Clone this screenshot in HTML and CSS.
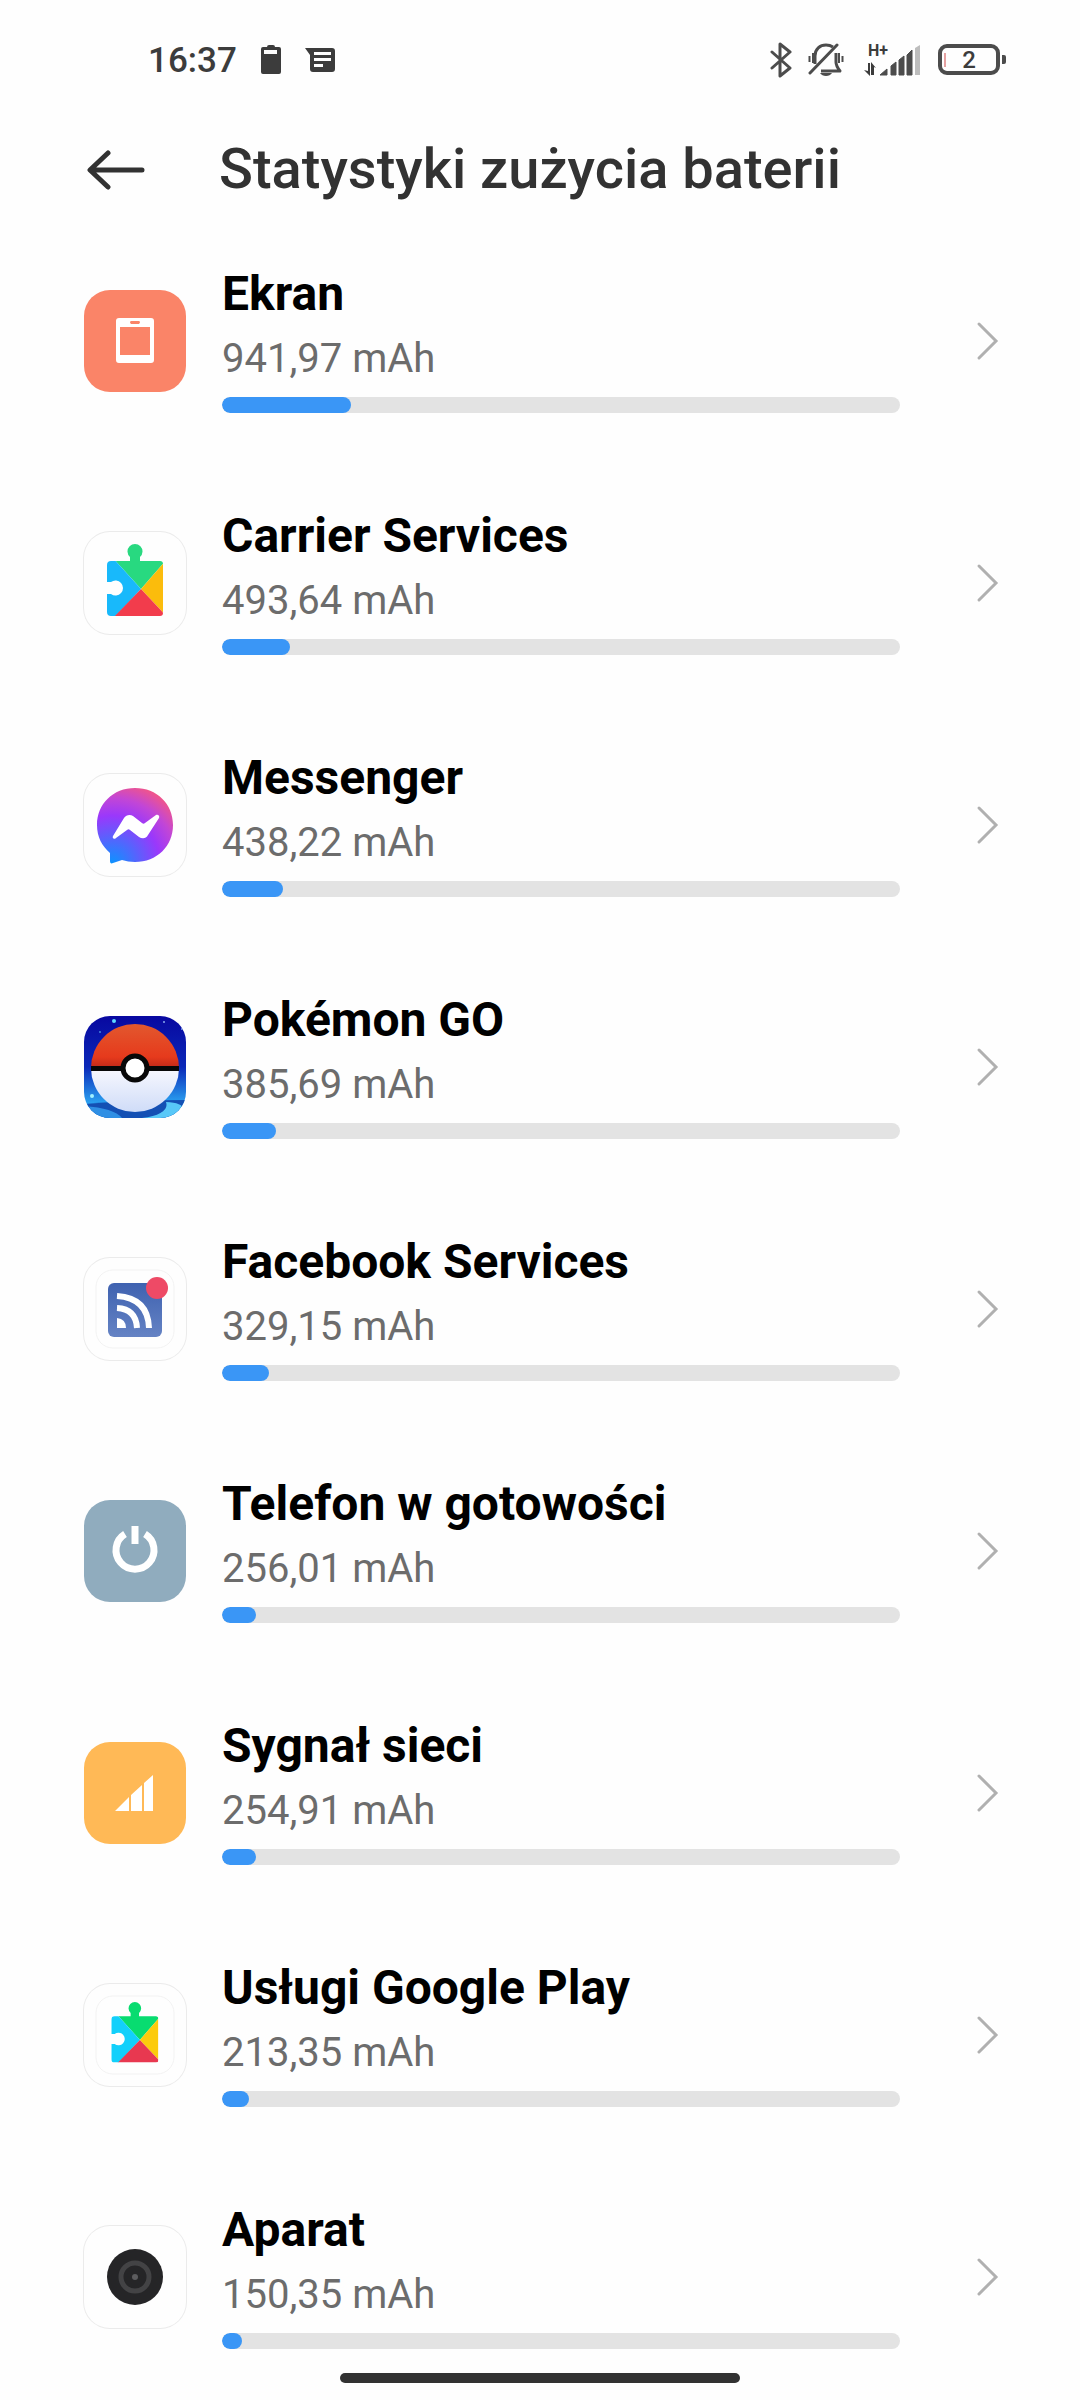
FILE: index.html
```html
<!DOCTYPE html>
<html lang="pl">
<head>
    <meta charset="UTF-8">
    <meta name="viewport" content="width=device-width, initial-scale=1.0">
    <title>Statystyki zużycia baterii</title>
    <link rel="stylesheet" href="styles.css">
</head>
<body>
    <div class="status">
        <span class="clock">16:37</span>
        <svg class="s-battery" width="20" height="30" viewBox="0 0 20 30">
            <path fill="#3c3c3c" fill-rule="evenodd" d="M6 2q0-2 2-2h4q2 0 2 2h4q2 0 2 2v23q0 2-2 2H2q-2 0-2-2V4q0-2 2-2zM3 5v4h13V5z"/>
        </svg>
        <svg class="s-message" width="30" height="26" viewBox="0 0 30 26">
            <path fill="#3c3c3c" fill-rule="evenodd" d="M0 1h27q3 0 3 3v18q0 3-3 3H8q-3 0-3-3V8zM9 5v3h17V5zM9 11v3h17v-3zM9 17v3h9v-3z"/>
        </svg>
        <div class="status-right">
            <svg width="22" height="36" viewBox="0 0 22 36" fill="none" stroke="#4c4c4c" stroke-width="3" stroke-linejoin="round" stroke-linecap="round">
                <path d="M2 10l18 16-10 8V2l10 8L2 26"/>
            </svg>
            <svg width="36" height="36" viewBox="0 0 36 36" fill="none" stroke="#4c4c4c" stroke-width="3">
                <path d="M7 22V14C7 7 12 3 18 3q4 0 7 2M28 11v9q0 4 4 9H13" stroke-linejoin="round"/>
                <path d="M2 31L29 3" stroke-linecap="round"/>
                <path d="M12 31h12q-2 3-6 3t-6-3z" fill="#4c4c4c" stroke="none"/>
                <path d="M1.500 14v6M5 11v10M31 11v10M34.500 14v6" stroke-width="2"/>
            </svg>
            <svg class="s-signal" width="58" height="36" viewBox="0 0 58 36">
                <text class="net" x="4" y="14">H+</text>
                <path d="M0 28l6 6V21h-2v8zM12 26l-5-6v13h3v-8z" fill="#3c3c3c"/>
                <path d="M16 33l7-6v6zM27 33V24l5-4v13zM35 33V18l5-4v19zM43 33V13l5-5v25z" fill="#4c4c4c" stroke="#4c4c4c"/>
                <path d="M51 33V6l5-3v30z" fill="#bdbdbd"/>
            </svg>
            <svg class="s-level" width="70" height="32" viewBox="0 0 70 32">
                <rect x="2" y="2" width="58" height="27" rx="7" fill="none" stroke="#4c4c4c" stroke-width="4"/>
                <path d="M7 9v14" stroke="#c44" stroke-width="1"/>
                <path d="M64 11h2q2 0 2 2v5q0 2-2 2h-2z" fill="#4c4c4c"/>
                <text class="level" x="31" y="24" text-anchor="middle">2</text>
            </svg>
        </div>
    </div>

    <header class="header">
        <button type="button" class="back" aria-label="Wstecz">
            <svg width="60" height="42" viewBox="0 0 60 42" fill="none" stroke="#323232" stroke-width="5" stroke-linecap="round" stroke-linejoin="round">
                <path d="M21 4L3 21l18 17M4 21h51"/>
            </svg>
        </button>
        <h1>Statystyki zużycia baterii</h1>
    </header>

    <ul class="list">
        <li>
            <a class="row" href="#">
                <svg class="icon screen" viewBox="0 0 102 102">
                    <path fill="#fff" fill-rule="evenodd" d="M35 28h32q3 0 3 3v39q0 3-3 3H35q-3 0-3-3V31q0-3 3-3zM36 37v28h30V37zM47 31q-2 1 0 3h8q2-2 0-3z"/>
                </svg>
                <span class="info">
                    <span class="name">Ekran</span>
                    <span class="usage">941,97 mAh</span>
                    <progress value="19" max="100" aria-label="Ekran"></progress>
                </span>
                <svg class="arrow" viewBox="0 0 24 42"><path d="M3 4l17 17L3 38"/></svg>
            </a>
        </li>
        <li>
            <a class="row" href="#">
                <svg class="icon framed" viewBox="0 0 102 102">
                    <defs>
                        <clipPath id="puzzle">
                            <path d="M27 29h19v-4a7.500 7.500 0 1 1 10 0v4h20q3 0 3 3v49q0 3-3 3H27q-4 0-4-4V62h4a7.500 7.500 0 1 0 0-12h-4V33q0-4 4-4z"/>
                        </clipPath>
                    </defs>
                    <g clip-path="url(#puzzle)">
                        <path fill="#28d980" d="M28 25V8h56v18L57 57z"/>
                        <path fill="#18b9fb" d="M18 25h10l29 32-30 32h-9z"/>
                        <path fill="#fbbc0c" d="M84 26L57 57l28 30z"/>
                        <path fill="#f23c4c" d="M57 57l28 30H28z"/>
                    </g>
                </svg>
                <span class="info">
                    <span class="name">Carrier Services</span>
                    <span class="usage">493,64 mAh</span>
                    <progress value="10" max="100" aria-label="Carrier Services"></progress>
                </span>
                <svg class="arrow" viewBox="0 0 24 42"><path d="M3 4l17 17L3 38"/></svg>
            </a>
        </li>
        <li>
            <a class="row" href="#">
                <svg class="icon framed" viewBox="0 0 102 102">
                    <defs>
                        <radialGradient id="bubble" gradientUnits="userSpaceOnUse" cx="28" cy="90" r="88">
                            <stop offset="0" stop-color="#0a94ff"/>
                            <stop offset=".55" stop-color="#9a38fb"/>
                            <stop offset=".75" stop-color="#c246d6"/>
                            <stop offset="1" stop-color="#ff5a72"/>
                        </radialGradient>
                    </defs>
                    <path fill="url(#bubble)" d="M51 14c22 0 38 16 38 37S73 88 51 88c-5 0-9-1-13-2l-9 3c-2 1-3 0-3-2v-8C18 72 13 63 13 51c0-21 16-37 38-37z"/>
                    <path fill="#fff" d="M29 62l11-18c2-3 6-4 9-2l9 7c1 1 2 1 3 0l11-8c2-1 4 1 3 3L64 61c-2 4-6 4-9 2l-9-7c-1-1-2-1-3 0l-11 8c-2 2-4 0-3-2z"/>
                </svg>
                <span class="info">
                    <span class="name">Messenger</span>
                    <span class="usage">438,22 mAh</span>
                    <progress value="9" max="100" aria-label="Messenger"></progress>
                </span>
                <svg class="arrow" viewBox="0 0 24 42"><path d="M3 4l17 17L3 38"/></svg>
            </a>
        </li>
        <li>
            <a class="row" href="#">
                <svg class="icon" viewBox="0 0 102 102">
                    <defs>
                        <linearGradient id="sky" x1="0" y1="0" x2="0" y2="1">
                            <stop offset="0" stop-color="#0808a0"/>
                            <stop offset=".5" stop-color="#0a28b8"/>
                            <stop offset=".85" stop-color="#2aa0f0"/>
                        </linearGradient>
                        <linearGradient id="ballTop" x1="0" y1="0" x2="0" y2="1">
                            <stop offset="0" stop-color="#e2582e"/>
                            <stop offset=".75" stop-color="#e63a1c"/>
                            <stop offset="1" stop-color="#c02818"/>
                        </linearGradient>
                        <linearGradient id="ballBottom" x1="0" y1="0" x2="0" y2="1">
                            <stop offset="0" stop-color="#f8f8fe"/>
                            <stop offset="1" stop-color="#cfdcf8"/>
                        </linearGradient>
                    </defs>
                    <rect width="102" height="102" fill="url(#sky)"/>
                    <path fill="#1450b4" d="M0 88q50-4 102-4v18H0z"/>
                    <path fill="#58c8f8" d="M82 86q26 1 12 16H58q28-4 24-16z"/>
                    <path fill="#2f8fe4" d="M0 90q30 2 38 12H0z"/>
                    <circle cx="30" cy="5" r="2" fill="#60d8ff"/>
                    <circle cx="8" cy="80" r="2" fill="#a0f0ff"/>
                    <circle cx="80" cy="6" r="1" fill="#8ae"/>
                    <circle cx="98" cy="13" r="1" fill="#8ae"/>
                    <circle cx="16" cy="16" r="1" fill="#48d"/>
                    <path fill="url(#ballTop)" d="M7 52a44 44 0 0 1 88 0z"/>
                    <path fill="url(#ballBottom)" d="M7 52a44 44 0 0 0 88 0z"/>
                    <path fill="#080808" d="M7 50h88v5H7z"/>
                    <circle cx="51" cy="52" r="12" fill="#fff" stroke="#080808" stroke-width="5"/>
                </svg>
                <span class="info">
                    <span class="name">Pokémon GO</span>
                    <span class="usage">385,69 mAh</span>
                    <progress value="8" max="100" aria-label="Pokémon GO"></progress>
                </span>
                <svg class="arrow" viewBox="0 0 24 42"><path d="M3 4l17 17L3 38"/></svg>
            </a>
        </li>
        <li>
            <a class="row" href="#">
                <svg class="icon framed" viewBox="0 0 102 102">
                    <defs>
                        <linearGradient id="feed" x1="0" y1="0" x2="0" y2="1">
                            <stop offset="0" stop-color="#3f62b0"/>
                            <stop offset="1" stop-color="#6583c4"/>
                        </linearGradient>
                    </defs>
                    <rect x="12" y="12" width="78" height="78" rx="17" fill="none" stroke="#f2f2f2"/>
                    <rect x="24" y="25" width="54" height="54" rx="6" fill="url(#feed)"/>
                    <path fill="#fff" d="M33 60q9 1 9 10h-9z"/>
                    <path fill="none" stroke="#fff" stroke-width="6" d="M33 50q19 1 20 20M33 38q31 2 32 32"/>
                    <circle cx="73" cy="30" r="11" fill="#ee4a66"/>
                </svg>
                <span class="info">
                    <span class="name">Facebook Services</span>
                    <span class="usage">329,15 mAh</span>
                    <progress value="7" max="100" aria-label="Facebook Services"></progress>
                </span>
                <svg class="arrow" viewBox="0 0 24 42"><path d="M3 4l17 17L3 38"/></svg>
            </a>
        </li>
        <li>
            <a class="row" href="#">
                <svg class="icon standby" viewBox="0 0 102 102" fill="none" stroke="#fff" stroke-width="7">
                    <path d="M41 34a19 19 0 1 0 20 0M51 26v18"/>
                </svg>
                <span class="info">
                    <span class="name">Telefon w gotowości</span>
                    <span class="usage">256,01 mAh</span>
                    <progress value="5" max="100" aria-label="Telefon w gotowości"></progress>
                </span>
                <svg class="arrow" viewBox="0 0 24 42"><path d="M3 4l17 17L3 38"/></svg>
            </a>
        </li>
        <li>
            <a class="row" href="#">
                <svg class="icon signal" viewBox="0 0 102 102">
                    <path fill="#fff" d="M31 69l14-14v14zM47 69V53l11-10v26zM60 69V41l9-8v36z"/>
                </svg>
                <span class="info">
                    <span class="name">Sygnał sieci</span>
                    <span class="usage">254,91 mAh</span>
                    <progress value="5" max="100" aria-label="Sygnał sieci"></progress>
                </span>
                <svg class="arrow" viewBox="0 0 24 42"><path d="M3 4l17 17L3 38"/></svg>
            </a>
        </li>
        <li>
            <a class="row" href="#">
                <svg class="icon framed" viewBox="0 0 102 102">
                    <rect x="12" y="12" width="78" height="78" rx="17" fill="none" stroke="#f2f2f2"/>
                    <g transform="translate(8 8) scale(.84)">
                        <g clip-path="url(#puzzle)">
                            <path fill="#08dc70" d="M28 25V8h56v18L57 57z"/>
                            <path fill="#12d0fb" d="M18 25h10l29 32-30 32h-9z"/>
                            <path fill="#fccb0c" d="M84 26L57 57l28 30z"/>
                            <path fill="#e83850" d="M57 57l28 30H28z"/>
                        </g>
                    </g>
                </svg>
                <span class="info">
                    <span class="name">Usługi Google Play</span>
                    <span class="usage">213,35 mAh</span>
                    <progress value="4" max="100" aria-label="Usługi Google Play"></progress>
                </span>
                <svg class="arrow" viewBox="0 0 24 42"><path d="M3 4l17 17L3 38"/></svg>
            </a>
        </li>
        <li>
            <a class="row" href="#">
                <svg class="icon framed" viewBox="0 0 102 102">
                    <circle cx="51" cy="51" r="28" fill="#252527"/>
                    <circle cx="51" cy="51" r="14" fill="none" stroke="#434345" stroke-width="5"/>
                    <circle cx="51" cy="51" r="3" fill="#5c5c5e"/>
                </svg>
                <span class="info">
                    <span class="name">Aparat</span>
                    <span class="usage">150,35 mAh</span>
                    <progress value="3" max="100" aria-label="Aparat"></progress>
                </span>
                <svg class="arrow" viewBox="0 0 24 42"><path d="M3 4l17 17L3 38"/></svg>
            </a>
        </li>
    </ul>
    <div class="homebar"></div>
</body>
</html>
```

FILE: styles.css
```css
* {
    box-sizing: border-box;
}
body {
    margin: 0;
    background: #fefefe;
    font-family: Roboto, "Liberation Sans", sans-serif;
    color: #000;
}

/* status bar */
.status {
    display: flex;
    align-items: center;
    height: 120px;
    padding: 0 72px 0 148px;
}
.clock {
    font-size: 35px;
    font-weight: 500;
    color: #3c3c3c;
    margin-right: 24px;
}
.s-message {
    margin-left: 24px;
}
.status-right {
    display: flex;
    align-items: center;
    gap: 16px;
    margin-left: auto;
}
.s-signal {
    margin-left: 4px;
}
.net {
    font-size: 16px;
    font-weight: 700;
    fill: #3c3c3c;
}
.level {
    font-size: 24px;
    font-weight: 500;
    fill: #3c3c3c;
}

/* title */
.header {
    display: flex;
    align-items: center;
    height: 98px;
    padding: 0 87px;
    gap: 72px;
}
.back {
    display: flex;
    padding: 2px 0 0;
    border: 0;
    background: none;
}
h1 {
    margin: 0;
    font-size: 56px;
    line-height: 72px;
    font-weight: 500;
    color: #323232;
}

/* app list */
.list {
    list-style: none;
    margin: 0;
    padding: 2px 0 0;
}
.row {
    display: flex;
    align-items: center;
    height: 242px;
    padding: 0 80px 0 84px;
    color: inherit;
    text-decoration: none;
}
.icon {
    flex: none;
    width: 102px;
    height: 102px;
    margin-right: 36px;
    border-radius: 26px;
}
.framed {
    box-shadow: 0 0 0 1px #ebebeb;
}
.screen {
    background: #fa8468;
}
.standby {
    background: #90acbe;
}
.signal {
    background: #ffb956;
}
.info {
    flex: 1;
    display: flex;
    flex-direction: column;
    padding-bottom: 7px;
}
.name {
    font-size: 48px;
    line-height: 64px;
    font-weight: 700;
}
.usage {
    margin-top: 5px;
    font-size: 40px;
    line-height: 56px;
    color: #6c6c6c;
}
progress {
    appearance: none;
    display: block;
    width: 100%;
    height: 16px;
    margin-top: 10px;
    border: 0;
    border-radius: 8px;
    background: #e3e3e3;
    overflow: hidden;
}
progress::-webkit-progress-bar {
    background: #e3e3e3;
}
progress::-webkit-progress-value {
    background: #3a96f6;
    border-radius: 8px;
}
.arrow {
    flex: none;
    width: 24px;
    height: 42px;
    margin-left: 76px;
    fill: none;
    stroke: #b0b0b0;
    stroke-width: 3;
    stroke-linecap: round;
}

.homebar {
    position: fixed;
    left: 50%;
    bottom: 17px;
    width: 400px;
    height: 10px;
    margin-left: -200px;
    border-radius: 5px;
    background: #323232;
}
```
